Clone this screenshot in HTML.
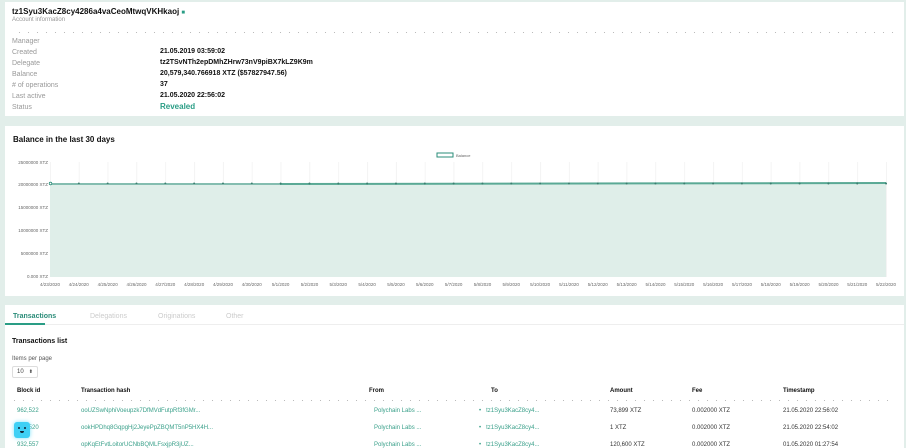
<!DOCTYPE html>
<html style="width:906px;height:448px;overflow:hidden"><head><meta charset="utf-8"><style>
*{margin:0;padding:0;box-sizing:border-box}
body{width:906px;height:448px;overflow:hidden;background:#e2eeea;font-family:"Liberation Sans",sans-serif;color:#111;position:relative}
.card{position:absolute;left:5px;width:899px;background:#fff}
.c1{top:2px;height:114px}
.c2{top:126px;height:170px}
.c3{top:305px;height:143px}
.t{position:absolute;font-size:7px;color:#999}
.v{position:absolute;font-size:7px;font-weight:bold;color:#111;left:155px}
.dots{position:absolute;height:1px;background-image:radial-gradient(circle,#bbb 0.6px,transparent 0.8px);background-size:9px 1px}
.g{color:#2a9d85}
.r{position:absolute;top:98px;font-size:6px;line-height:17px}
</style></head><body>
<div class="card c1">
<div style="position:absolute;left:7px;top:5px;font-size:8px;font-weight:bold">tz1Syu3KacZ8cy4286a4vaCeoMtwqVKHkaoj <span style="color:#2a9d85;font-size:6px">■</span></div>
<div class="t" style="left:7px;top:15px;font-size:6px">Account information</div>
<div class="dots" style="left:10px;top:30px;width:880px"></div>
<div class="t" style="left:7px;top:36px">Manager</div>
<div class="t" style="left:7px;top:47px">Created</div><div class="v" style="top:46px">21.05.2019 03:59:02</div>
<div class="t" style="left:7px;top:58px">Delegate</div><div class="v" style="top:57px">tz2TSvNTh2epDMhZHrw73nV9piBX7kLZ9K9m</div>
<div class="t" style="left:7px;top:69px">Balance</div><div class="v" style="top:68px">20,579,340.766918 XTZ ($57827947.56)</div>
<div class="t" style="left:7px;top:80px"># of operations</div><div class="v" style="top:79px">37</div>
<div class="t" style="left:7px;top:91px">Last active</div><div class="v" style="top:90px">21.05.2020 22:56:02</div>
<div class="t" style="left:7px;top:102px">Status</div><div class="v g" style="top:100px;font-size:8px">Revealed</div>
</div>
<div class="card c2">
<div style="position:absolute;left:8px;top:9px;font-size:8px;font-weight:bold">Balance in the last 30 days</div>
</div>
<svg style="position:absolute;left:0;top:0" width="906" height="300" font-family="Liberation Sans" font-size="4.5" fill="#666">
<defs><pattern id="gp" x="50" y="0" width="28.83" height="300" patternUnits="userSpaceOnUse"><line x1="0.3" y1="0" x2="0.3" y2="300" stroke="#eee" stroke-width="0.7"/></pattern></defs>
<rect x="50" y="162" width="837" height="115" fill="url(#gp)"/>
<rect x="50" y="183" width="836" height="94" fill="#dfeee9"/>
<line x1="50" y1="184" x2="280" y2="184" stroke="#2a8c78" stroke-width="1"/>
<line x1="280" y1="184" x2="886" y2="183" stroke="#5aa995" stroke-width="2"/>
<line x1="50" y1="183.5" x2="887" y2="183.5" stroke="#3a7f70" stroke-width="2" stroke-dasharray="0 28.83" stroke-linecap="round"/>
<circle cx="50.5" cy="183.5" r="1.3" fill="#fff" stroke="#2a8c78" stroke-width="0.8"/>
<rect x="437" y="153" width="16" height="4" fill="#fff" stroke="#2a8c78" stroke-width="1"/>
<text x="456" y="157" font-size="4">Balance</text>
<g text-anchor="end"><text x="48" y="164">25000000 XTZ</text><text x="48" y="186">20000000 XTZ</text><text x="48" y="209">15000000 XTZ</text><text x="48" y="232">10000000 XTZ</text><text x="48" y="255">5000000 XTZ</text><text x="48" y="278">0.000 XTZ</text></g>
<g text-anchor="middle">
<text x="50" y="286">4/23/2020</text><text x="78.8" y="286">4/24/2020</text><text x="107.7" y="286">4/25/2020</text><text x="136.5" y="286">4/26/2020</text><text x="165.3" y="286">4/27/2020</text><text x="194.2" y="286">4/28/2020</text><text x="223" y="286">4/29/2020</text><text x="251.8" y="286">4/30/2020</text><text x="280.6" y="286">5/1/2020</text><text x="309.5" y="286">5/2/2020</text><text x="338.3" y="286">5/3/2020</text><text x="367.1" y="286">5/4/2020</text><text x="396" y="286">5/5/2020</text><text x="424.8" y="286">5/6/2020</text><text x="453.6" y="286">5/7/2020</text><text x="482.5" y="286">5/8/2020</text><text x="511.3" y="286">5/9/2020</text><text x="540.1" y="286">5/10/2020</text><text x="569" y="286">5/11/2020</text><text x="597.8" y="286">5/12/2020</text><text x="626.6" y="286">5/13/2020</text><text x="655.5" y="286">5/14/2020</text><text x="684.3" y="286">5/15/2020</text><text x="713.1" y="286">5/16/2020</text><text x="742" y="286">5/17/2020</text><text x="770.8" y="286">5/18/2020</text><text x="799.6" y="286">5/19/2020</text><text x="828.5" y="286">5/20/2020</text><text x="857.3" y="286">5/21/2020</text><text x="886" y="286">5/22/2020</text>
</g></svg>
<div class="card c3">
<div style="position:absolute;left:0;right:0;top:19px;height:1px;background:#eee"></div>
<div style="position:absolute;left:0;width:40px;top:18px;height:2px;background:#2a9d85"></div>
<div style="position:absolute;left:8px;top:8px;font-size:7px;font-weight:bold;color:#2a8c78">Transactions</div>
<div style="position:absolute;left:85px;top:8px;font-size:7px;color:#ccc">Delegations</div>
<div style="position:absolute;left:153px;top:8px;font-size:7px;color:#ccc">Originations</div>
<div style="position:absolute;left:221px;top:8px;font-size:7px;color:#ccc">Other</div>
<div style="position:absolute;left:7px;top:33px;font-size:7px;font-weight:bold">Transactions list</div>
<div style="position:absolute;left:7px;top:51px;font-size:6px;color:#555">Items per page</div>
<div style="position:absolute;left:7px;top:61px;width:26px;height:12px;border:1px solid #ddd;border-radius:2px;font-size:6px;padding:2px 4px;color:#444">10<span style="float:right;font-size:5px">⬍</span></div>
<div style="position:absolute;left:12px;top:83px;font-size:6px;font-weight:bold">Block id</div>
<div style="position:absolute;left:76px;top:83px;font-size:6px;font-weight:bold">Transaction hash</div>
<div style="position:absolute;left:364px;top:83px;font-size:6px;font-weight:bold">From</div>
<div style="position:absolute;left:486px;top:83px;font-size:6px;font-weight:bold">To</div>
<div style="position:absolute;left:605px;top:83px;font-size:6px;font-weight:bold">Amount</div>
<div style="position:absolute;left:687px;top:83px;font-size:6px;font-weight:bold">Fee</div>
<div style="position:absolute;left:778px;top:83px;font-size:6px;font-weight:bold">Timestamp</div>
<div class="dots" style="left:5px;top:95px;width:880px"></div>
<div class="r" style="left:12px;color:#3aa08a">962,522<br>962,520<br>932,557</div>
<div class="r" style="left:76px;color:#3aa08a">ooUZSwNphiVoeupzk7DfMVdFutpRf3fGMr...<br>ookHPDhq8GqpgHj2JeyePpZBQMT5nP5HX4H...<br>opKqEtFvtLoitorUCNbBQMLFsxjpR3jUZ...</div>
<div class="r" style="left:369px;color:#3aa08a">Polychain Labs ...<br>Polychain Labs ...<br>Polychain Labs ...</div>
<div class="r" style="left:474px;color:#3aa08a">•&nbsp;&nbsp;&nbsp;tz1Syu3KacZ8cy4...<br>•&nbsp;&nbsp;&nbsp;tz1Syu3KacZ8cy4...<br>•&nbsp;&nbsp;&nbsp;tz1Syu3KacZ8cy4...</div>
<div class="r" style="left:605px;color:#333">73,899 XTZ<br>1 XTZ<br>120,600 XTZ</div>
<div class="r" style="left:687px;color:#333">0.002000 XTZ<br>0.002000 XTZ<br>0.002000 XTZ</div>
<div class="r" style="left:778px;color:#333">21.05.2020 22:56:02<br>21.05.2020 22:54:02<br>01.05.2020 01:27:54</div>
</div>
<div style="position:absolute;left:14px;top:422px;width:16px;height:16px;background:#3fd0f5;border-radius:3px;box-shadow:0 0 4px #7de3fa"><div style="position:absolute;left:4px;top:5px;width:2px;height:2px;background:#123;border-radius:1px"></div><div style="position:absolute;left:10px;top:5px;width:2px;height:2px;background:#123;border-radius:1px"></div><div style="position:absolute;left:6px;top:9px;width:4px;height:2px;background:#123;border-radius:0 0 2px 2px"></div></div>
</body></html>
